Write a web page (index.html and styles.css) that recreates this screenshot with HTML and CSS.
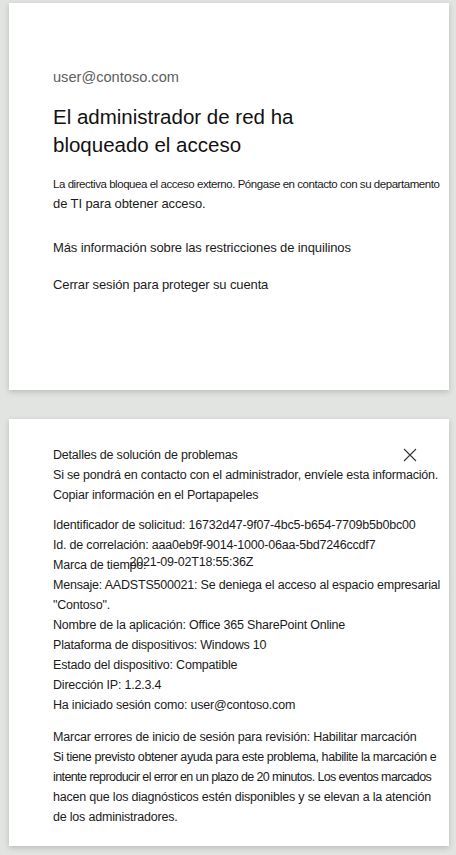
FILE: index.html
```html
<!DOCTYPE html>
<html lang="es">
<head>
<meta charset="utf-8">
<link rel="stylesheet" href="styles.css">
</head>
<body>
<div class="page">
  <section class="card card-main">
    <div class="email">user@contoso.com</div>
    <h1 class="title">El administrador de red ha<br>bloqueado el acceso</h1>
    <p class="desc"><span class="desc-a">La directiva bloquea el acceso externo. Póngase en contacto con su departamento</span><span class="desc-b">de TI para obtener acceso.</span></p>
    <div class="link link-first">Más información sobre las restricciones de inquilinos</div>
    <div class="link">Cerrar sesión para proteger su cuenta</div>
  </section>
  <section class="card card-details">
    <div class="details-head">
      <div class="line">Detalles de solución de problemas</div>
      <svg class="close" width="14" height="14" viewBox="0 0 14 14" aria-hidden="true"><path d="M1 1 L13 13 M13 1 L1 13" stroke="#333" stroke-width="1.1" fill="none"/></svg>
    </div>
    <div class="line">Si se pondrá en contacto con el administrador, envíele esta información.</div>
    <div class="line">Copiar información en el Portapapeles</div>
    <div class="group">
      <div class="line">Identificador de solicitud: 16732d47-9f07-4bc5-b654-7709b5b0bc00</div>
      <div class="line">Id. de correlación: aaa0eb9f-9014-1000-06aa-5bd7246ccdf7</div>
      <div class="line">Marca de tiempo:<span class="stamp">2021-09-02T18:55:36Z</span></div>
      <div class="line">Mensaje: AADSTS500021: Se deniega el acceso al espacio empresarial</div>
      <div class="line">"Contoso".</div>
      <div class="line">Nombre de la aplicación: Office 365 SharePoint Online</div>
      <div class="line">Plataforma de dispositivos: Windows 10</div>
      <div class="line">Estado del dispositivo: Compatible</div>
      <div class="line">Dirección IP: 1.2.3.4</div>
      <div class="line">Ha iniciado sesión como: user@contoso.com</div>
    </div>
    <div class="group group-flag">
      <div class="line">Marcar errores de inicio de sesión para revisión: Habilitar marcación</div>
      <div class="line tight">Si tiene previsto obtener ayuda para este problema, habilite la marcación e</div>
      <div class="line tighter">intente reproducir el error en un plazo de 20 minutos. Los eventos marcados</div>
      <div class="line">hacen que los diagnósticos estén disponibles y se elevan a la atención</div>
      <div class="line">de los administradores.</div>
    </div>
  </section>
</div>
</body>
</html>
```

FILE: styles.css
```css
html, body {
  margin: 0;
  padding: 0;
}
body {
  background: #e2e4e2;
  font-family: "Liberation Sans", Arial, sans-serif;
  color: #1b1b1b;
}
.page {
  display: flex;
  flex-direction: column;
  gap: 29px;
  padding: 3px 7px 9px 9px;
}
.card {
  background: #fff;
  box-shadow: 0 2px 6px rgba(0, 0, 0, 0.18);
  padding-left: 44px;
  box-sizing: border-box;
}
.card-main {
  height: 387px;
  padding-top: 64px;
}
.email {
  font-size: 14.6px;
  line-height: 20px;
  color: #5e5e5e;
}
.title {
  margin: 16px 0 0;
  font-size: 20.5px;
  font-weight: normal;
  line-height: 28px;
  color: #111;
}
.desc {
  margin: 16px 0 0;
  color: #1b1b1b;
}
.desc-a {
  display: block;
  font-size: 11.5px;
  line-height: 18px;
  letter-spacing: -0.45px;
  white-space: nowrap;
}
.desc-b {
  display: block;
  font-size: 13px;
  line-height: 22px;
  letter-spacing: -0.1px;
}
.link {
  font-size: 13px;
  line-height: 20px;
  letter-spacing: -0.12px;
  margin-top: 17px;
}
.link-first {
  margin-top: 23px;
}
.card-details {
  height: 427px;
  padding-top: 26px;
  padding-right: 30px;
  font-size: 12.5px;
  letter-spacing: -0.2px;
}
.details-head {
  display: flex;
  justify-content: space-between;
  align-items: center;
}
.close {
  margin-right: 2px;
}
.line {
  line-height: 20px;
  white-space: nowrap;
}
.tight {
  letter-spacing: -0.42px;
}
.tighter {
  letter-spacing: -0.6px;
}
.group {
  margin-top: 10px;
}
.group-flag {
  margin-top: 12px;
}
.stamp {
  position: relative;
  top: -3px;
  margin-left: -17px;
}
```
